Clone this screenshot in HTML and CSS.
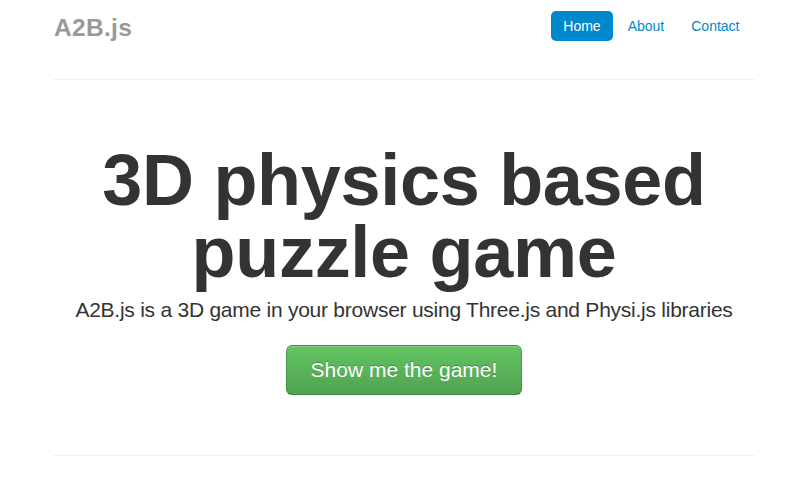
FILE: index.html
```html
<!DOCTYPE html>
<html>
<head>
<meta charset="utf-8">
<title>A2B.js</title>
<link rel="stylesheet" href="styles.css">
</head>
<body>
<div class="container">
  <header class="masthead">
    <h3 class="brand">A2B.js</h3>
    <ul class="nav-pills">
      <li><a class="pill active" href="#">Home</a></li>
      <li><a class="pill" href="#">About</a></li>
      <li><a class="pill" href="#">Contact</a></li>
    </ul>
  </header>
  <hr class="rule">
  <section class="jumbotron">
    <h1 class="headline">3D physics based puzzle game</h1>
    <p class="lead">A2B.js is a 3D game in your browser using Three.js and Physi.js libraries</p>
    <a class="btn-success" href="#">Show me the game!</a>
  </section>
  <hr class="rule">
</div>
</body>
</html>
```

FILE: styles.css
```css
html, body {
  margin: 0;
  background: #fff;
}
body {
  padding: 0 4px 0 0;
  font-family: "Liberation Sans", Arial, Helvetica, sans-serif;
  color: #333;
  font-size: 14px;
  line-height: 20px;
}
.container {
  width: 700px;
  margin: 0 auto;
}
.masthead {
  display: flex;
  justify-content: space-between;
  align-items: flex-start;
  padding: 11px 0 36px;
}
.brand {
  margin: 2px 0 0;
  font-size: 24.5px;
  line-height: 30px;
  font-weight: bold;
  color: #999;
  letter-spacing: 0.3px;
}
.nav-pills {
  display: flex;
  list-style: none;
  margin: 0;
  padding: 0;
}
.pill {
  display: block;
  margin-right: 2px;
  padding: 5px 12.5px;
  line-height: 20px;
  font-size: 14px;
  color: #0088cc;
  text-decoration: none;
  border-radius: 5px;
}
.pill.active {
  background: #0088cc;
  color: #fff;
}
.rule {
  margin: 0;
  border: 0;
  border-top: 1px solid #eee;
  border-bottom: 1px solid #fff;
}
.jumbotron {
  padding: 63px 0 60px;
  text-align: center;
}
.headline {
  margin: 0 0 7px;
  font-size: 72px;
  line-height: 72px;
  font-weight: bold;
  color: #333;
  letter-spacing: -0.3px;
}
.lead {
  margin: 0 0 20px;
  font-size: 21px;
  line-height: 30px;
  font-weight: normal;
  letter-spacing: -0.25px;
}
.btn-success {
  display: inline-block;
  padding: 14px 24px;
  font-size: 21px;
  line-height: 20px;
  color: #fff;
  text-decoration: none;
  text-shadow: 0 -1px 0 rgba(0, 0, 0, 0.25);
  background-color: #5bb75b;
  background-image: linear-gradient(to bottom, #62c462, #51a351);
  border: 1px solid rgba(0, 0, 0, 0.15);
  border-bottom-color: rgba(0, 0, 0, 0.3);
  border-radius: 6px;
  box-shadow: inset 0 1px 0 rgba(255, 255, 255, 0.2), 0 1px 2px rgba(0, 0, 0, 0.05);
}
```
